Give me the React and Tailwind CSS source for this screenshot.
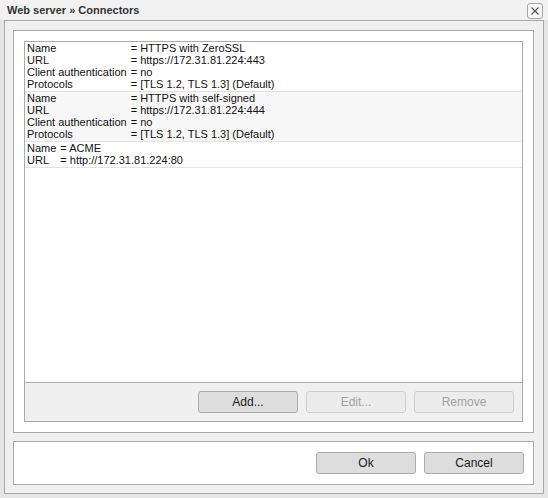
import React from "react";

const rows = [
  [
    ["Name", "HTTPS with ZeroSSL"],
    ["URL", "https://172.31.81.224:443"],
    ["Client authentication", "no"],
    ["Protocols", "[TLS 1.2, TLS 1.3] (Default)"],
  ],
  [
    ["Name", "HTTPS with self-signed"],
    ["URL", "https://172.31.81.224:444"],
    ["Client authentication", "no"],
    ["Protocols", "[TLS 1.2, TLS 1.3] (Default)"],
  ],
  [
    ["Name", "ACME"],
    ["URL", "http://172.31.81.224:80"],
  ],
];

function Btn({ children, disabled }) {
  return (
    <div
      className={
        "w-[100px] h-[22px] flex items-center justify-center rounded-[3px] border text-[12px] " +
        (disabled
          ? "border-[#cfcfcf] bg-[#ececec] text-[#a3a3a3]"
          : "border-[#acacac] bg-[#dddddd] text-[#1a1a1a]")
      }
    >
      {children}
    </div>
  );
}

export default function App() {
  return (
    <div
      className="w-[548px] h-[498px] bg-[#e6e6e6] flex flex-col overflow-hidden"
      style={{ fontFamily: '"Liberation Sans", Arial, sans-serif' }}
    >
      <div className="h-[20px] flex items-center justify-between pl-[7px] pr-[5px] bg-[#f2f2f2]">
        <span className="text-[11px] font-bold text-[#333333]">Web server » Connectors</span>
        <div className="w-[16px] h-[16px] mt-[1px] border border-[#a8a8a8] rounded-[3px] bg-[#f7f7f7] flex items-center justify-center">
          <svg width="10" height="10" viewBox="0 0 10 10">
            <path d="M1.5 1.5 L8.5 8.5 M8.5 1.5 L1.5 8.5" stroke="#555" strokeWidth="1.1" />
          </svg>
        </div>
      </div>
      <div className="ml-[4px] w-[540px] h-[474px] border border-[#a9a9a9] bg-[#f0f0f0] pt-[9px] px-[8px] flex flex-col">
        <div className="w-[521px] h-[403px] border border-[#ababab] bg-white p-[10px]">
          <div className="w-[499px] h-[381px] border border-[#a6abb0] flex flex-col">
            <div className="flex-1 bg-white text-[11px] leading-[12px] text-[#111]">
              {rows.map((r, i) => (
                <div
                  key={i}
                  className={
                    "grid grid-cols-[auto_1fr] gap-x-[4px] pl-[2px] pb-[1px] border-b border-[#e3e3e3] " +
                    (i === 1 ? "bg-[#f7f7f7]" : "bg-white")
                  }
                >
                  {r.map(([k, v], j) => (
                    <React.Fragment key={j}>
                      <div>{k}</div>
                      <div>= {v}</div>
                    </React.Fragment>
                  ))}
                </div>
              ))}
            </div>
            <div className="h-[39px] border-t border-[#a6abb0] bg-[#f0f0f0] flex items-start justify-end gap-[8px] pt-[8px] pr-[8px]">
              <Btn>Add...</Btn>
              <Btn disabled>Edit...</Btn>
              <Btn disabled>Remove</Btn>
            </div>
          </div>
        </div>
        <div className="mt-[8px] w-[521px] h-[44px] border border-[#ababab] bg-white flex items-start justify-end gap-[8px] pt-[10px] pr-[9px]">
          <Btn>Ok</Btn>
          <Btn>Cancel</Btn>
        </div>
      </div>
    </div>
  );
}
